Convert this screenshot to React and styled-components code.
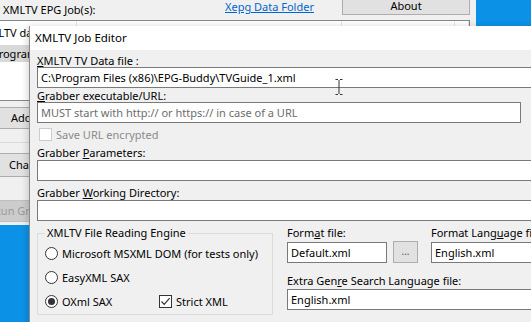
import styled, { createGlobalStyle } from "styled-components";

const GlobalStyle = createGlobalStyle`
  body {
    margin: 0;
    font-family: "Noto Sans", "Open Sans", sans-serif;
    font-size: 11px;
    color: #000;
  }
`;

const Desktop = styled.div`
  position: relative;
  width: 531px;
  height: 322px;
  overflow: hidden;
  background: #0b92e6;
`;

/* ---------- main window behind ---------- */

const MainWindow = styled.div`
  position: absolute;
  left: -30px;
  top: -8px;
  width: 506px;
  height: 233px;
  background: #f0f0f0;
  display: flex;
  flex-direction: column;
`;

const TopBar = styled.div`
  height: 28px;
  padding-left: 33px;
  display: grid;
  grid-template-columns: 222px 117px 128px;
  align-items: start;
`;

const JobsLabel = styled.div`
  margin-top: 10px;
  line-height: 16px;
`;

const FolderLink = styled.a`
  margin-top: 7px;
  line-height: 16px;
  color: #0066cc;
  text-decoration: underline;
`;

const WinButton = styled.div`
  height: ${(p) => p.$h || 22}px;
  box-sizing: border-box;
  background: ${(p) => (p.$disabled ? "#cccccc" : "#e1e1e1")};
  border: 1px solid ${(p) => (p.$disabled ? "#bfbfbf" : "#adadad")};
  color: ${(p) => (p.$disabled ? "#9a9a9a" : "#000")};
  display: flex;
  align-items: center;
  justify-content: ${(p) => (p.$pad != null ? "flex-start" : "center")};
  padding-left: ${(p) => p.$pad || 0}px;
  line-height: 14px;
  white-space: nowrap;
`;

const AboutButton = styled(WinButton)`
  margin-top: 5px;
`;

const ListView = styled.div`
  margin-left: 5px;
  margin-right: 6px;
  height: 81px;
  box-sizing: border-box;
  background: #fff;
  border: 1px solid #828790;
`;

const HeaderRow = styled.div`
  display: grid;
  grid-template-columns: 101px 265px 113px 1fr;
  height: 24px;
`;

const HeaderCell = styled.div`
  padding-left: 6px;
  line-height: 24px;
  border-right: 1px solid #e5e5e5;
  white-space: nowrap;
  overflow: hidden;
`;

const ItemRow = styled.div`
  display: grid;
  grid-template-columns: 101px 265px 113px 1fr;
  height: 17px;
  background: #d9d9d9;
`;

const ItemCell = styled.div`
  padding-left: 2px;
  line-height: 17px;
  white-space: nowrap;
  overflow: hidden;
`;

const ButtonColumn = styled.div`
  display: flex;
  flex-direction: column;
  width: 120px;
  margin-left: 10px;
`;

const Separator = styled.div`
  height: 1px;
  margin: 13px 0 10px -10px;
  background: #dadada;
`;

/* ---------- dialog ---------- */

const Dialog = styled.div`
  position: absolute;
  left: 29px;
  top: 26px;
  width: 600px;
  height: 320px;
  background: #f0f0f0;
  border-left: 1px solid #8c8c8c;
  box-shadow: -2px 0 6px rgba(0, 0, 0, 0.15);
`;

const TitleBar = styled.div`
  height: 24px;
  line-height: 24px;
  padding-left: 5px;
  background: #fff;
  font-size: 11.5px;
`;

const Client = styled.div`
  padding: 4px 0 0 7px;
  display: flex;
  flex-direction: column;
  align-items: flex-start;
`;

const Label = styled.div`
  height: ${(p) => p.$h || 13}px;
  line-height: ${(p) => p.$h || 13}px;
  margin-top: ${(p) => p.$mt || 0}px;
  white-space: nowrap;
`;

const TextBox = styled.div`
  width: ${(p) => p.$w}px;
  height: 21px;
  margin-top: ${(p) => p.$mt || 0}px;
  box-sizing: border-box;
  border: 1px solid #7a7a7a;
  background: #fff;
  padding-left: 3px;
  line-height: 19px;
  white-space: nowrap;
  overflow: hidden;
  color: ${(p) => (p.$placeholder ? "#6d6d6d" : "#000")};
  flex-shrink: 0;
`;

const CheckRow = styled.label`
  display: flex;
  align-items: center;
  gap: 4px;
  width: ${(p) => (p.$w ? `${p.$w}px` : "auto")};
  height: ${(p) => p.$h || 22}px;
  padding-left: 2px;
  color: ${(p) => (p.$disabled ? "#8b8b8b" : "#000")};
  white-space: nowrap;
`;

const CheckBox = styled.span`
  width: 13px;
  height: 13px;
  box-sizing: border-box;
  border: 1px solid ${(p) => (p.$disabled ? "#cccccc" : "#333")};
  background: #fff;
  display: flex;
  align-items: center;
  justify-content: center;
  flex-shrink: 0;
`;

const Radio = styled.span`
  width: 13px;
  height: 13px;
  box-sizing: border-box;
  border-radius: 50%;
  border: 1px solid #333;
  background: #fff;
  display: flex;
  align-items: center;
  justify-content: center;
  flex-shrink: 0;

  &::after {
    content: "";
    width: 7px;
    height: 7px;
    border-radius: 50%;
    background: ${(p) => (p.$checked ? "#333" : "transparent")};
  }
`;

const BottomSection = styled.div`
  display: flex;
  margin-top: 5px;
`;

const GroupBox = styled.fieldset`
  width: 236px;
  height: 89px;
  box-sizing: border-box;
  margin: 0;
  padding: 1px 0 0 5px;
  border: 1px solid #dcdcdc;

  legend {
    padding: 0 2px;
    margin-left: 2px;
    line-height: 14px;
  }
`;

const RadioLine = styled.div`
  display: flex;
  align-items: center;
  height: 24px;
`;

const FilesColumn = styled.div`
  margin-left: 14px;
  display: flex;
  flex-direction: column;
`;

const FilesRow = styled.div`
  display: flex;
  align-items: flex-end;
`;

const FileField = styled.div`
  display: flex;
  flex-direction: column;
  margin-left: ${(p) => p.$ml || 0}px;
`;

const BrowseButton = styled(WinButton)`
  width: 25px;
  margin-left: 6px;
  color: #555;
  font-size: 10px;
  align-items: flex-end;
  padding-bottom: 4px;
`;

const Spacer = styled.div`
  height: ${(p) => p.$h}px;
`;

const IBeam = styled.svg`
  position: absolute;
  left: 305px;
  top: 53px;
`;

const Check = () => (
  <svg width="11" height="11" viewBox="0 0 11 11">
    <path d="M1.5 5.5 L4.2 8.3 L9.6 2.2" fill="none" stroke="#333" strokeWidth="1.2" />
  </svg>
);

export default function App() {
  return (
    <>
      <GlobalStyle />
      <Desktop>
        <MainWindow>
          <TopBar>
            <JobsLabel>
              XMLTV EPG <u>J</u>ob(s):
            </JobsLabel>
            <FolderLink>Xepg Data Folder</FolderLink>
            <AboutButton $h={18}>About</AboutButton>
          </TopBar>
          <ListView>
            <HeaderRow>
              <HeaderCell>XMLTV data file</HeaderCell>
              <HeaderCell>Grabber</HeaderCell>
              <HeaderCell>Format</HeaderCell>
              <HeaderCell />
            </HeaderRow>
            <ItemRow>
              <ItemCell>C:\Program Files</ItemCell>
              <ItemCell />
              <ItemCell />
              <ItemCell />
            </ItemRow>
          </ListView>
          <ButtonColumn>
            <Spacer $h={6} />
            <WinButton $h={22} $pad={30}>Add Job</WinButton>
            <Separator />
            <WinButton $h={24} $pad={28}>Change Job</WinButton>
            <Spacer $h={23} />
            <WinButton $h={22} $pad={13} $disabled>
              Run Grabber
            </WinButton>
          </ButtonColumn>
        </MainWindow>

        <Dialog>
          <TitleBar>XMLTV Job Editor</TitleBar>
          <Client>
            <Label>
              <u>X</u>MLTV TV Data file :
            </Label>
            <TextBox $w={520}>C:\Program Files (x86)\EPG-Buddy\TVGuide_1.xml</TextBox>
            <Label $mt={1}>
              <u>G</u>rabber executable/URL:
            </Label>
            <TextBox $w={484} $placeholder>
              MUST start with http:// or https:// in case of a URL
            </TextBox>
            <CheckRow $disabled>
              <CheckBox $disabled />
              Save URL encrypted
            </CheckRow>
            <Label $h={15}>
              Grabber <u>P</u>arameters:
            </Label>
            <TextBox $w={520} />
            <Label $mt={5} $h={14}>
              Grabber <u>W</u>orking Directory:
            </Label>
            <TextBox $w={520} />

            <BottomSection>
              <GroupBox>
                <legend>XMLTV File Reading Engine</legend>
                <RadioLine>
                  <CheckRow>
                    <Radio />
                    Microsoft MSXML DOM (for tests only)
                  </CheckRow>
                </RadioLine>
                <RadioLine>
                  <CheckRow>
                    <Radio />
                    EasyXML SAX
                  </CheckRow>
                </RadioLine>
                <RadioLine>
                  <CheckRow $w={112}>
                    <Radio $checked />
                    OXml SAX
                  </CheckRow>
                  <CheckRow>
                    <CheckBox>
                      <Check />
                    </CheckBox>
                    Strict XML
                  </CheckRow>
                </RadioLine>
              </GroupBox>

              <FilesColumn>
                <FilesRow>
                  <FileField>
                    <Label $h={14}>
                      Form<u>a</u>t file:
                    </Label>
                    <TextBox $w={100} $mt={2}>Default.xml</TextBox>
                  </FileField>
                  <BrowseButton $h={22}>...</BrowseButton>
                  <FileField $ml={13}>
                    <Label $h={14}>
                      Format Lang<u>u</u>age file:
                    </Label>
                    <TextBox $w={120} $mt={2}>English.xml</TextBox>
                  </FileField>
                </FilesRow>
                <Label $mt={11} $h={14}>
                  Extra Gen<u>r</u>e Search Language file:
                </Label>
                <TextBox $w={260} $mt={1}>English.xml</TextBox>
              </FilesColumn>
            </BottomSection>
          </Client>
          <IBeam width="8" height="16" viewBox="0 0 8 16">
            <path d="M0.5 0.5 H3 M5 0.5 H7.5 M4 1 V15 M0.5 15.5 H3 M5 15.5 H7.5" stroke="#333" strokeWidth="1" fill="none" />
          </IBeam>
        </Dialog>
      </Desktop>
    </>
  );
}
